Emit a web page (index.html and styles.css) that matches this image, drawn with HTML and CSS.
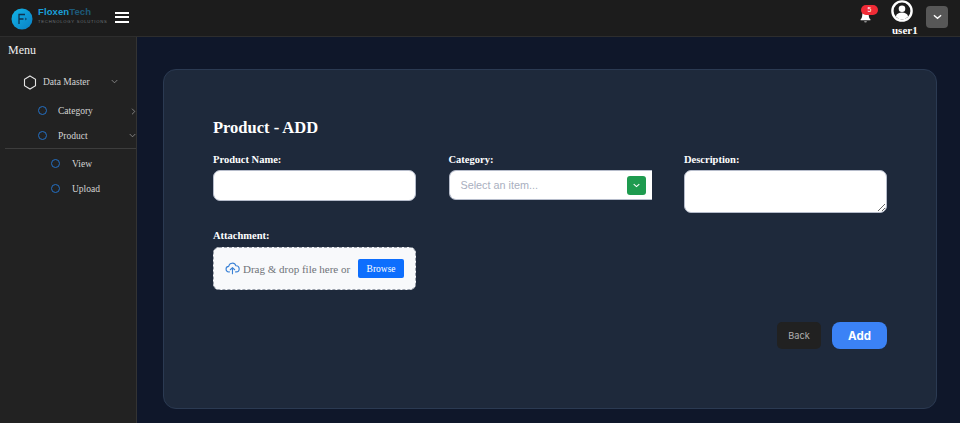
FILE: index.html
```html
<!DOCTYPE html>
<html lang="en">
<head>
<meta charset="utf-8">
<title>Product - ADD</title>
<link rel="stylesheet" href="styles.css">
</head>
<body>
<header class="topbar">
  <div class="brand">
    <svg class="logo" viewBox="0 0 22 22" width="22" height="22">
      <defs><linearGradient id="lg" x1="0" y1="0" x2="1" y2="1"><stop offset="0" stop-color="#12b5e8"/><stop offset="1" stop-color="#0a7fc4"/></linearGradient></defs>
      <circle cx="11" cy="11" r="10.5" fill="url(#lg)"/>
      <path d="M8 16V6.500h6M8 11h4.500" fill="none" stroke="#0f3350" stroke-width="1.300"/>
      <path d="M14 10l1.500 1-1.500 1" fill="none" stroke="#0f3350" stroke-width=".8"/>
    </svg>
    <div class="brand-text">
      <div class="brand-name"><span class="b1">Floxen</span><span class="b2">Tech</span></div>
      <div class="brand-sub">TECHNOLOGY SOLUTIONS</div>
    </div>
    <div class="burger"><i></i><i></i><i></i></div>
  </div>
  <div class="top-right">
    <div class="bell">
      <svg viewBox="0 0 16 16" width="13" height="13"><path d="M8 1.500c-2.600 0-4 2-4 4.500 0 3-1 4.500-2 5.500v1h12v-1c-1-1-2-2.500-2-5.500 0-2.500-1.400-4.500-4-4.500zM6.300 14a1.800 1.800 0 0 0 3.400 0z" fill="#fff"/></svg>
      <span class="badge">5</span>
    </div>
    <div class="user">
      <svg viewBox="0 0 22 22" width="22" height="22"><circle cx="11" cy="11" r="9.600" fill="#1c1c1c" stroke="#fff" stroke-width="2.400"/><circle cx="11" cy="8.800" r="3.300" fill="#fff"/><path d="M4.800 16.500c.8-3 3.200-4 6.200-4s5.400 1 6.200 4a8 8 0 0 1-12.400 0z" fill="#fff"/></svg>
      <span class="user-name">user1</span>
    </div>
    <button class="user-menu"><svg viewBox="0 0 10 6" width="9" height="6"><path d="M1 1l4 3.500L9 1" fill="none" stroke="#fff" stroke-width="1.500"/></svg></button>
  </div>
</header>
<div class="shell">
  <aside class="sidebar">
    <div class="menu-title">Menu</div>
    <div class="item top-item">
      <svg class="hex" viewBox="0 0 14 15" width="14" height="15"><path d="M7 1l5.500 3.200v6.600L7 14l-5.500-3.200V4.200z" fill="none" stroke="#e5e5e5" stroke-width="1.100"/></svg>
      <span class="label">Data Master</span>
      <svg class="chev dm" viewBox="0 0 8 5" width="7" height="5"><path d="M.8 .8L4 4 7.200 .8" fill="none" stroke="#999" stroke-width=".9"/></svg>
    </div>
    <div class="item sub-item">
      <span class="dot"></span><span class="label">Category</span>
      <svg class="chev edge" viewBox="0 0 5 8" width="5" height="7"><path d="M.8 .8L4 4 .8 7.200" fill="none" stroke="#999" stroke-width=".9"/></svg>
    </div>
    <div class="item sub-item open">
      <span class="dot"></span><span class="label">Product</span>
      <svg class="chev edge" viewBox="0 0 8 5" width="7" height="5"><path d="M.8 .8L4 4 7.200 .8" fill="none" stroke="#999" stroke-width=".9"/></svg>
    </div>
    <div class="item leaf-item first"><span class="dot"></span><span class="label">View</span></div>
    <div class="item leaf-item"><span class="dot"></span><span class="label">Upload</span></div>
  </aside>
  <main class="content">
    <section class="card">
      <h1 class="title">Product - ADD</h1>
      <div class="form-grid">
        <div class="field">
          <label class="lbl">Product Name:</label>
          <input class="input" type="text">
        </div>
        <div class="field">
          <label class="lbl">Category:</label>
          <div class="select">
            <span class="placeholder">Select an item...</span>
            <span class="select-btn"><svg viewBox="0 0 10 6" width="7" height="5"><path d="M1 1l4 3.500L9 1" fill="none" stroke="#fff" stroke-width="1.600"/></svg></span>
          </div>
        </div>
        <div class="field">
          <label class="lbl">Description:</label>
          <textarea class="textarea"></textarea>
        </div>
        <div class="field attach">
          <label class="lbl">Attachment:</label>
          <div class="drop">
            <svg viewBox="0 0 24 24" width="15" height="15"><path d="M7 17.500H6.500a4.500 4.500 0 0 1-.6-9A6 6 0 0 1 17.500 7.500a5 5 0 0 1 .5 10h-1M12 20.500V11M8.500 14L12 10.500 15.500 14" fill="none" stroke="#3b82d6" stroke-width="1.800" stroke-linecap="round" stroke-linejoin="round"/></svg>
            <span class="drop-text">Drag &amp; drop file here or</span>
            <button class="browse">Browse</button>
          </div>
        </div>
      </div>
      <div class="actions">
        <button class="back">Back</button>
        <button class="add">Add</button>
      </div>
    </section>
  </main>
</div>
</body>
</html>
```
FILE: styles.css
```css
* { box-sizing: border-box; }
html, body { margin: 0; padding: 0; height: 423px; overflow: hidden; }
body { background: #0f172a; font-family: "Liberation Serif", serif; color: #fff; display: flex; flex-direction: column; }

.topbar { height: 37px; flex: none; background: #1c1c1c; border-bottom: 1px solid #2d2d2d; display: flex; justify-content: space-between; align-items: stretch; }
.brand { display: flex; align-items: center; padding-left: 11px; }
.logo { margin-top: 1px; }
.brand-text { margin-left: 5px; width: 77px; margin-top: -5px; }
.brand-name { font: bold 9.500px/11px "Liberation Sans", sans-serif; letter-spacing: .1px; }
.b1 { color: #1a9fd8; }
.b2 { color: #1d5a7a; }
.brand-sub { font: 4.200px/6px "Liberation Sans", sans-serif; letter-spacing: .75px; color: #6d7378; margin-top: 2px; white-space: nowrap; }
.burger { margin-top: -2px; width: 14px; display: flex; flex-direction: column; gap: 2.500px; }
.burger i { display: block; height: 2px; background: #fff; }

.top-right { display: flex; align-items: flex-start; padding-right: 12px; }
.bell { position: relative; margin: 10px 19px 0 0; height: 14px; line-height: 0; }
.badge { position: absolute; left: 2px; top: -5px; width: 17px; height: 10px; background: #ef2b36; border-radius: 5px; font: 7px/10px "Liberation Sans", sans-serif; text-align: center; color: #fff; }
.user { display: flex; flex-direction: column; align-items: flex-start; width: 26px; margin-right: 9px; line-height: 0; }
.user-name { font: bold 11px/12px "Liberation Serif", serif; margin: 2px 0 0 1px; }
.user-menu { width: 22px; height: 22px; margin-top: 6px; background: #575757; border: 0; border-radius: 4px; padding: 0; display: flex; align-items: center; justify-content: center; }

.shell { flex: 1; display: flex; min-height: 0; }
.sidebar { width: 137px; flex: none; background: #222222; border-right: 1px solid #333; padding-top: 6px; }
.menu-title { font-size: 12px; line-height: 15px; color: #eee; padding-left: 8px; margin-bottom: 11px; }
.item { position: relative; display: flex; align-items: center; color: #d4d4d4; font-size: 9.500px; }
.top-item { height: 26px; padding-left: 23px; margin-bottom: 3px; }
.top-item .label { margin-left: 6px; }
.chev { position: absolute; }
.chev.dm { left: 111px; top: 10px; }
.chev.edge { right: 0; top: 50%; margin-top: -3px; }
.dot { width: 9px; height: 9px; border: 1.600px solid #2470c4; border-radius: 50%; flex: none; }
.sub-item { height: 25px; padding-left: 38px; }
.sub-item .label { margin-left: 11px; }
.sub-item.open { margin-left: 5px; padding-left: 33px; border-bottom: 1px solid #3d3d3d; height: 26px; }
.leaf-item { height: 25px; padding-left: 51px; }
.leaf-item.first { margin-top: 2px; }
.leaf-item .label { margin-left: 12px; }

.content { flex: 1; padding: 32px 23px 14px 26px; min-width: 0; }
.card { height: 340px; background: #1e293b; border: 1px solid #2b3a52; border-radius: 13px; padding: 48px 49px 0; }
.title { margin: 0; font-size: 16.500px; line-height: 19px; font-weight: 700; }
.form-grid { display: grid; grid-template-columns: repeat(3, 203px); column-gap: 32.500px; margin-top: 16px; align-items: start; }
.field { display: flex; flex-direction: column; min-width: 0; }
.lbl { font-size: 10.500px; font-weight: 700; line-height: 13px; margin-bottom: 4px; }
.input { height: 31px; width: 100%; background: #fff; border: 1px solid #b6bccb; border-radius: 7px; padding: 0; }
.select { height: 30px; width: 203px; background: #fff; border: 1px solid #b6bccb; border-right: 0; border-radius: 7px 0 0 7px; display: flex; align-items: center; justify-content: space-between; padding: 0 6px 0 11px; }
.placeholder { font: 10.800px "Liberation Sans", sans-serif; color: #a9afc0; }
.select-btn { width: 19px; height: 19px; background: #1e9b4f; border-radius: 3px; display: flex; align-items: center; justify-content: center; }
.textarea { height: 43px; width: 100%; background: #fff; border: 1px solid #b6bccb; border-radius: 7px; display: block; padding: 0; }
.attach { grid-column: 1; margin-top: 16px; }
.attach .lbl { margin-bottom: 5px; }
.drop { height: 43px; background: #f8f9fb; border: 1px dashed #9aa0ab; border-radius: 6px; display: flex; align-items: center; padding: 0 11px; }
.drop-text { font-size: 11px; color: #6f7379; margin-left: 3px; white-space: nowrap; }
.browse { margin-left: 8px; width: 46px; height: 19px; background: #0d6efd; border: 0; border-radius: 2px; color: #fff; font: 9.500px "Liberation Serif", serif; padding: 0; }
.actions { display: flex; justify-content: flex-end; gap: 11px; margin-top: 32px; align-items: center; }
.back { width: 44px; height: 27px; background: #212121; border: 0; border-radius: 5px; color: #b0b0b0; font: 9.200px Inter, sans-serif; padding: 0; }
.add { width: 55px; height: 27px; background: #3b82f6; border: 0; border-radius: 8px; color: #fff; font: 700 11.500px Inter, sans-serif; padding: 0; }
```
